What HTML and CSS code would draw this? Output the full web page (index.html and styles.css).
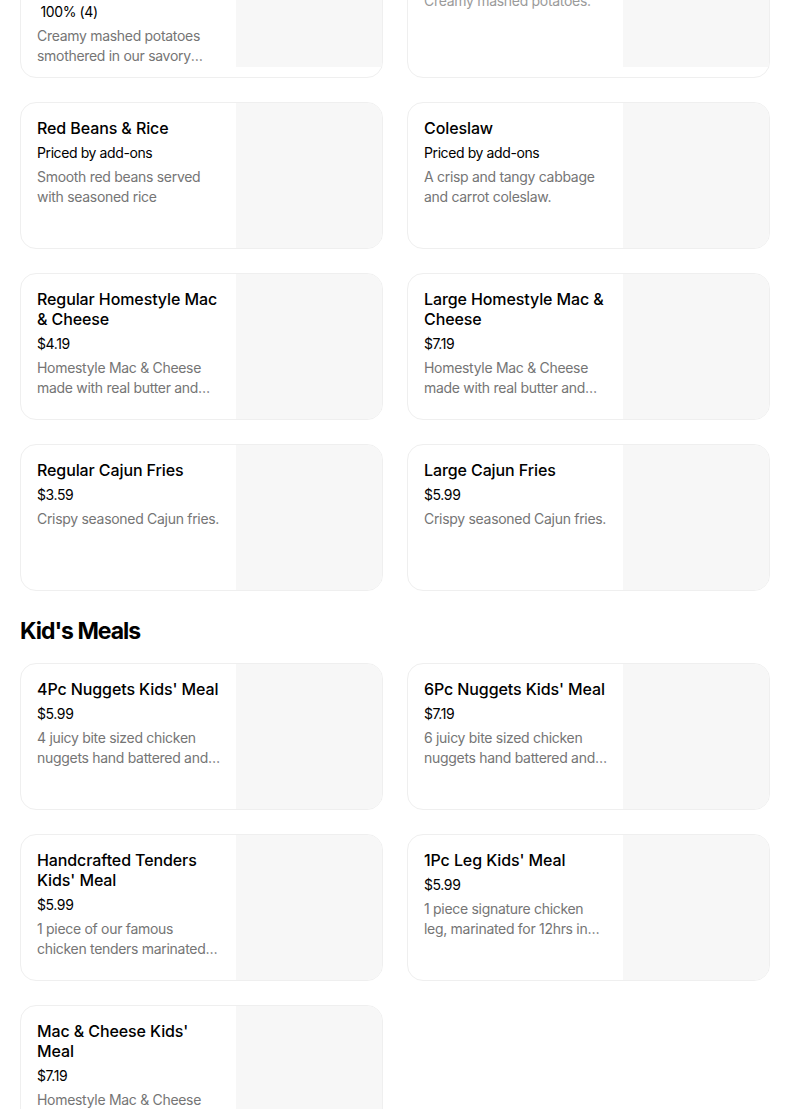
FILE: index.html
```html
<!DOCTYPE html>
<html lang="en">
<head>
<meta charset="utf-8">
<title>Menu</title>
<link rel="stylesheet" href="styles.css">
</head>
<body>
<main class="menu">
  <section class="grid grid-first">
    <article class="card">
      <div class="info">
        <h3 class="name">Regular Mashed Potatoes &amp; Cajun Gravy</h3>
        <div class="price">Priced by add-ons • <svg class="thumb" viewBox="0 0 16 16" width="12" height="12" aria-hidden="true"><path d="M1 7h3v8H1zM5 7l3-6c1.5 0 2 1 2 2v3h4c1 0 1.6.8 1.4 1.8l-1.2 6c-.2.8-.8 1.2-1.6 1.2H5z" fill="#000"/></svg> <span class="rating">&nbsp;100%&nbsp;(4)</span></div>
        <p class="desc">Creamy mashed potatoes smothered in our savory Cajun gravy made fresh daily.</p>
      </div>
      <div class="photo"></div>
    </article>
    <article class="card">
      <div class="info">
        <h3 class="name">Large Mashed Potatoes</h3>
        <div class="price">$5.99</div>
        <p class="desc desc-top">Creamy mashed potatoes.</p>
      </div>
      <div class="photo"></div>
    </article>
  </section>

  <section class="grid">
    <article class="card">
      <div class="info">
        <h3 class="name">Red Beans &amp; Rice</h3>
        <div class="price">Priced by add-ons</div>
        <p class="desc">Smooth red beans served with seasoned rice</p>
      </div>
      <div class="photo"></div>
    </article>
    <article class="card">
      <div class="info">
        <h3 class="name">Coleslaw</h3>
        <div class="price">Priced by add-ons</div>
        <p class="desc">A crisp and tangy cabbage and carrot coleslaw.</p>
      </div>
      <div class="photo"></div>
    </article>
    <article class="card">
      <div class="info">
        <h3 class="name">Regular Homestyle Mac &amp; Cheese</h3>
        <div class="price">$4.19</div>
        <p class="desc">Homestyle Mac &amp; Cheese made with real butter and three kinds of cheese, baked fresh.</p>
      </div>
      <div class="photo"></div>
    </article>
    <article class="card">
      <div class="info">
        <h3 class="name">Large Homestyle Mac &amp; Cheese</h3>
        <div class="price">$7.19</div>
        <p class="desc">Homestyle Mac &amp; Cheese made with real butter and three kinds of cheese, baked fresh.</p>
      </div>
      <div class="photo"></div>
    </article>
    <article class="card">
      <div class="info">
        <h3 class="name">Regular Cajun Fries</h3>
        <div class="price">$3.59</div>
        <p class="desc">Crispy seasoned Cajun fries.</p>
      </div>
      <div class="photo"></div>
    </article>
    <article class="card">
      <div class="info">
        <h3 class="name">Large Cajun Fries</h3>
        <div class="price">$5.99</div>
        <p class="desc">Crispy seasoned Cajun fries.</p>
      </div>
      <div class="photo"></div>
    </article>
  </section>

  <h2 class="section-title">Kid's Meals</h2>

  <section class="grid">
    <article class="card">
      <div class="info">
        <h3 class="name">4Pc Nuggets Kids' Meal</h3>
        <div class="price">$5.99</div>
        <p class="desc">4 juicy bite sized chicken nuggets hand battered and…</p>
      </div>
      <div class="photo"></div>
    </article>
    <article class="card">
      <div class="info">
        <h3 class="name">6Pc Nuggets Kids' Meal</h3>
        <div class="price">$7.19</div>
        <p class="desc">6 juicy bite sized chicken nuggets hand battered and…</p>
      </div>
      <div class="photo"></div>
    </article>
    <article class="card">
      <div class="info">
        <h3 class="name">Handcrafted Tenders Kids' Meal</h3>
        <div class="price">$5.99</div>
        <p class="desc">1 piece of our famous chicken tenders marinated for 12 hours, served with a side and a drink.</p>
      </div>
      <div class="photo"></div>
    </article>
    <article class="card">
      <div class="info">
        <h3 class="name">1Pc Leg Kids' Meal</h3>
        <div class="price">$5.99</div>
        <p class="desc">1 piece signature chicken leg, marinated for 12hrs in our special blend of seasonings.</p>
      </div>
      <div class="photo"></div>
    </article>
    <article class="card">
      <div class="info">
        <h3 class="name">Mac &amp; Cheese Kids' Meal</h3>
        <div class="price">$7.19</div>
        <p class="desc">Homestyle Mac &amp; Cheese made with real butter and three kinds of cheese, served with a drink.</p>
      </div>
      <div class="photo"></div>
    </article>
  </section>
</main>
</body>
</html>
```

FILE: styles.css
```css
* {
  box-sizing: border-box;
}

html, body {
  margin: 0;
  padding: 0;
  background: #ffffff;
}

body {
  font-family: Inter, "Liberation Sans", Arial, sans-serif;
  color: #000000;
  overflow: hidden;
}

.menu {
  padding: 0 34px 40px 20px;
}

.grid {
  display: grid;
  grid-template-columns: 363px 363px;
  gap: 24px;
}

.grid-first {
  margin-top: -79px;
  margin-bottom: 24px;
}

.card {
  display: flex;
  min-height: 147px;
  border: 1px solid #efefef;
  border-radius: 16px;
  overflow: hidden;
  background: #ffffff;
}

.info {
  flex: 1;
  min-width: 0;
  padding: 15px 16px 11px 16px;
}

.name {
  margin: 0;
  font-size: 16px;
  line-height: 20px;
  font-weight: 500;
  color: #000000;
  letter-spacing: -0.1px;
}

.price {
  margin-top: 5px;
  font-size: 14px;
  line-height: 20px;
  font-weight: 400;
  color: #000000;
  letter-spacing: -0.4px;
}

.thumb {
  vertical-align: -1px;
}

.desc {
  margin: 4px 0 0 0;
  font-size: 14px;
  line-height: 20px;
  color: #757575;
  letter-spacing: -0.3px;
  display: -webkit-box;
  -webkit-line-clamp: 2;
  -webkit-box-orient: vertical;
  overflow: hidden;
}

.desc-top {
  margin-top: 9px;
  color: #9a9a9a;
}

.photo {
  flex: 0 0 146px;
  width: 146px;
  height: 145px;
  background: #f7f7f7;
}

.section-title {
  margin: 24px 0 16px 0;
  font-size: 23px;
  line-height: 32px;
  font-weight: 700;
  letter-spacing: -1px;
  color: #000000;
}
```
